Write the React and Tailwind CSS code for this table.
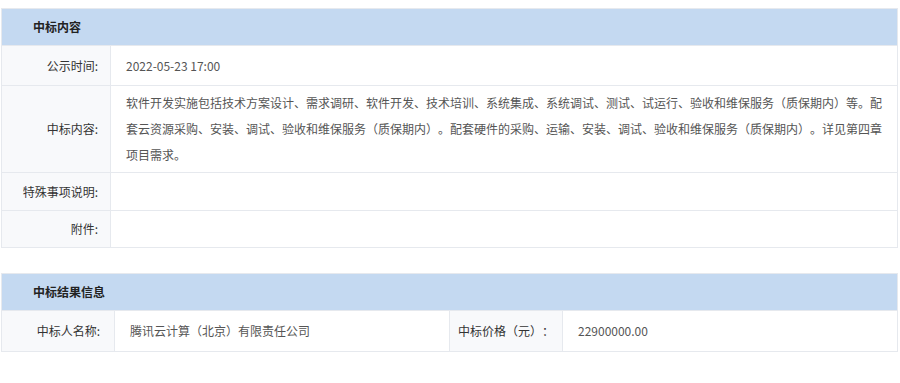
import React from 'react';

const contentLines = [
  '软件开发实施包括技术方案设计、需求调研、软件开发、技术培训、系统集成、系统调试、测试、试运行、验收和维保服务（质保期内）等。配',
  '套云资源采购、安装、调试、验收和维保服务（质保期内）。配套硬件的采购、运输、安装、调试、验收和维保服务（质保期内）。详见第四章',
  '项目需求。',
];

const bidRows = [
  { label: '公示时间:', value: '2022-05-23 17:00', h: 'h-[40px]' },
  {
    label: '中标内容:',
    value: contentLines.map((line, i) => (
      <React.Fragment key={i}>
        {line}
        {i < contentLines.length - 1 && <br />}
      </React.Fragment>
    )),
    h: 'min-h-[87px]',
  },
  { label: '特殊事项说明:', value: '', h: 'h-[38px]' },
  { label: '附件:', value: '', h: 'h-[37px]' },
];

const SectionHeader = ({ title }) => (
  <div className="h-[36px] bg-[#c4d9f1] pl-[31px] flex items-center text-[12px] font-bold text-[#222]">
    {title}
  </div>
);

const App = () => {
  return (
    <div
      className="bg-white pt-2 pl-px pr-[2px] text-[12px] text-[#333] [text-spacing-trim:space-all]"
      style={{ fontFamily: '"Noto Sans CJK SC", "Noto Sans", sans-serif' }}
    >
      {/* 中标内容 */}
      <div className="border border-[#e6e9ee]">
        <SectionHeader title="中标内容" />
        {bidRows.map((row) => (
          <div key={row.label} className={`flex border-t border-[#e6e9ee] ${row.h}`}>
            <div className="w-[109px] shrink-0 bg-[#f8f9fb] border-r border-[#e6e9ee] flex items-center justify-end pr-3">
              {row.label}
            </div>
            <div className="flex-1 flex items-center pl-[15px] pr-2 py-1 leading-[26px] text-[#555] whitespace-nowrap">
              <div>{row.value}</div>
            </div>
          </div>
        ))}
      </div>

      {/* 中标结果信息 */}
      <div className="mt-[25px] border border-[#e6e9ee]">
        <SectionHeader title="中标结果信息" />
        <div className="flex h-[41px] border-t border-[#e6e9ee]">
          <div className="w-[113px] shrink-0 bg-[#f8f9fb] border-r border-[#e6e9ee] flex items-center justify-end pr-[14px]">
            中标人名称:
          </div>
          <div className="w-[334px] shrink-0 flex items-center pl-[15px] text-[#555]">
            腾讯云计算（北京）有限责任公司
          </div>
          <div className="w-[114px] shrink-0 bg-[#f8f9fb] border-x border-[#e6e9ee] flex items-center justify-end pr-2">
            中标价格（元）：
          </div>
          <div className="flex-1 flex items-center pl-[15px] text-[#555]">22900000.00</div>
        </div>
      </div>
    </div>
  );
};

export default App;
